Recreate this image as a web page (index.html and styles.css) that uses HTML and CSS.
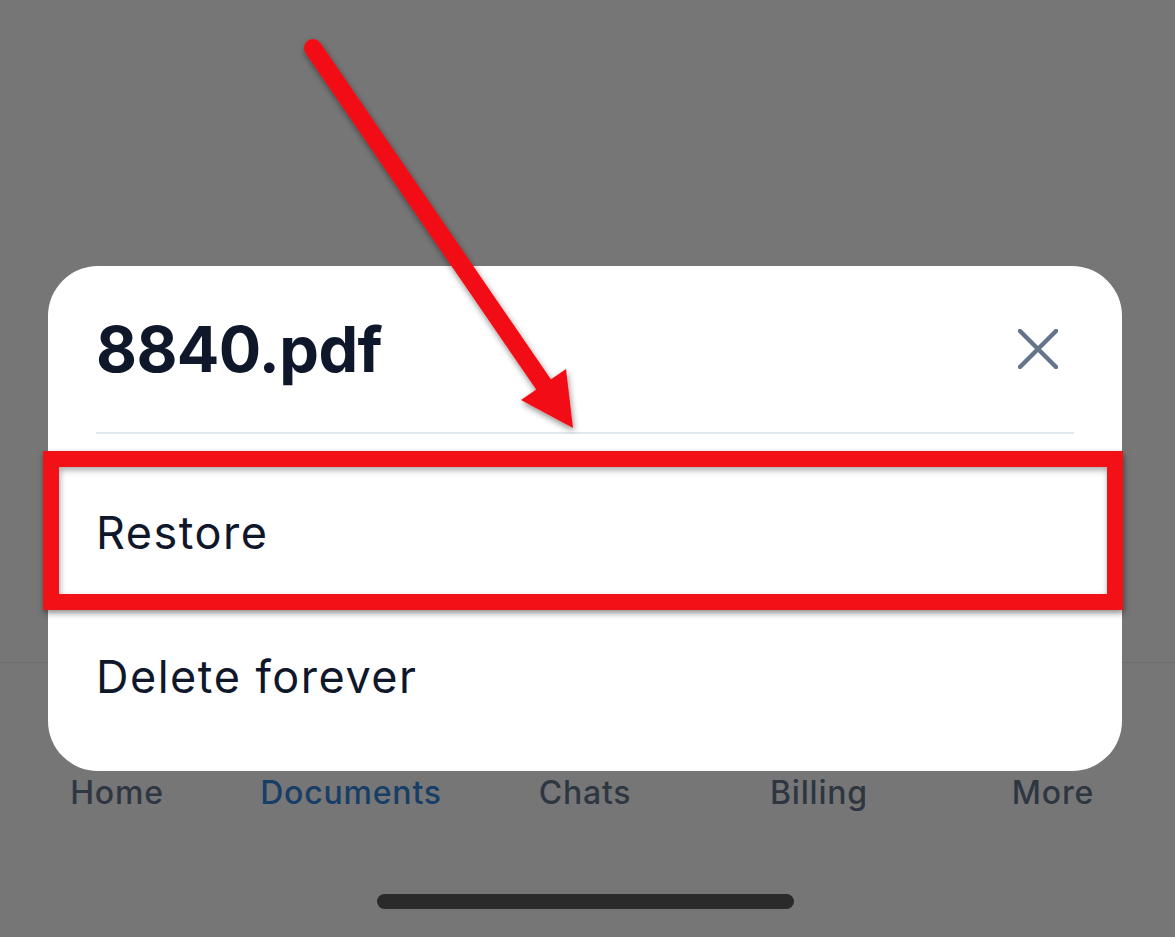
FILE: index.html
```html
<!DOCTYPE html>
<html lang="en">
<head>
<meta charset="utf-8">
<title>8840.pdf</title>
<link rel="stylesheet" href="styles.css">
</head>
<body>
<div class="screen">
  <div class="content"></div>
  <nav class="tabbar">
    <div class="tabs">
      <span class="tab">Home</span>
      <span class="tab active">Documents</span>
      <span class="tab">Chats</span>
      <span class="tab">Billing</span>
      <span class="tab">More</span>
    </div>
    <div class="home-indicator"></div>
  </nav>

  <div class="sheet">
    <div class="sheet-head">
      <h1 class="sheet-title">8840.pdf</h1>
      <button class="close" aria-label="Close">
        <svg width="40" height="40" viewBox="0 0 40 40"><path d="M2 2 L38 38 M38 2 L2 38" stroke="#64748b" stroke-width="4.5" stroke-linecap="round" fill="none"/></svg>
      </button>
    </div>
    <div class="divider"></div>
    <div class="item">Restore</div>
    <div class="item">Delete forever</div>
  </div>

  <div class="highlight"></div>

  <svg class="arrow" width="1175" height="937" viewBox="0 0 1175 937">
    <defs>
      <filter id="sh" x="-20%" y="-20%" width="140%" height="140%">
        <feDropShadow dx="1" dy="3" stdDeviation="3" flood-color="#000" flood-opacity="0.45"/>
      </filter>
    </defs>
    <g filter="url(#sh)">
      <line x1="313" y1="48" x2="546" y2="388" stroke="#f21116" stroke-width="18" stroke-linecap="round"/>
      <polygon points="521,400 566,369 573,428" fill="#f21116"/>
    </g>
  </svg>
</div>
</body>
</html>
```

FILE: styles.css
```css
* { box-sizing: border-box; }
html, body { margin: 0; padding: 0; }
body {
  background: #767676;
  font-family: Inter, "Noto Sans", "Liberation Sans", sans-serif;
}
.screen {
  position: relative;
  width: 1175px;
  height: 937px;
  overflow: hidden;
  display: flex;
  flex-direction: column;
}
.content { flex: 1; }
.tabbar {
  height: 275px;
  border-top: 1px solid #6c6c73;
  display: flex;
  flex-direction: column;
  align-items: flex-start;
}
.tabs {
  display: grid;
  grid-template-columns: repeat(5, 234px);
  padding-top: 110px;
}
.tab {
  text-align: center;
  font-size: 32px;
  line-height: 40px;
  font-weight: 500;
  letter-spacing: 0.8px;
  color: #2e3642;
}
.tab.active { color: #163e66; }
.home-indicator {
  margin: 81px 0 0 377px;
  width: 417px;
  height: 15px;
  border-radius: 8px;
  background: #2a2a2a;
}
.sheet {
  position: absolute;
  left: 48px;
  top: 266px;
  width: 1074px;
  height: 505px;
  background: #fff;
  border-radius: 50px;
  padding: 45px 48px 22px;
  display: flex;
  flex-direction: column;
}
.sheet-head {
  display: flex;
  align-items: center;
  justify-content: space-between;
  height: 76px;
}
.sheet-title {
  margin: 0;
  font-size: 63px;
  line-height: 76px;
  font-weight: 700;
  letter-spacing: -0.6px;
  color: #0f172a;
}
.close {
  border: 0;
  background: none;
  padding: 0;
  margin-right: 16px;
  width: 40px;
  height: 40px;
  display: flex;
}
.divider {
  margin-top: 45px;
  height: 2px;
  background: #e2e8f0;
  margin-bottom: 27px;
}
.item {
  padding: 45px 0;
  font-size: 45px;
  line-height: 54px;
  color: #0f172a;
  letter-spacing: 1.5px;
}
.highlight {
  position: absolute;
  left: 43px;
  top: 451px;
  width: 1080px;
  height: 159px;
  border: 16px solid #f21116;
  box-shadow: 1px 3px 6px rgba(0,0,0,0.45), inset 1px 3px 6px rgba(0,0,0,0.35);
}
.arrow {
  position: absolute;
  left: 0;
  top: 0;
  pointer-events: none;
}
```
